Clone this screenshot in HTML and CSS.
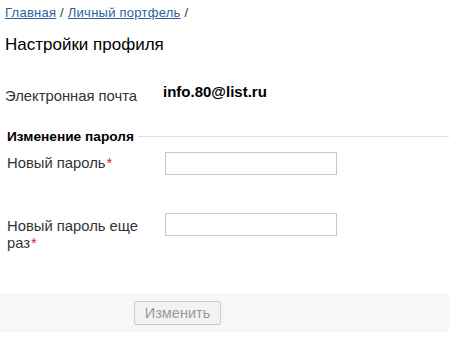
FILE: index.html
```html
<!DOCTYPE html>
<html lang="ru">
<head>
<meta charset="utf-8">
<link rel="stylesheet" href="styles.css">
</head>
<body>
<div class="page">
  <div class="crumbs"><a href="#">Главная</a> / <a href="#">Личный портфель</a> /</div>
  <h1 class="title">Настройки профиля</h1>
  <div class="row email-row">
    <div class="label">Электронная почта</div>
    <div class="value">info.80@list.ru</div>
  </div>
  <div class="section">
    <span class="section-title">Изменение пароля</span>
    <span class="section-line"></span>
  </div>
  <div class="row field">
    <div class="label">Новый пароль<span class="req">*</span></div>
    <input class="input" type="password">
  </div>
  <div class="row field field2">
    <div class="label">Новый пароль еще <span class="nowrap">раз<span class="req">*</span></span></div>
    <input class="input" type="password">
  </div>
  <div class="actions">
    <button class="btn" disabled>Изменить</button>
  </div>
</div>
</body>
</html>
```
FILE: styles.css
```css
html, body { margin: 0; padding: 0; background: #fff; }
body { font-family: "Liberation Sans", Arial, sans-serif; color: #333; font-size: 14.8px; }
.page { padding: 6px 0 0 0; }
.crumbs { font-size: 13px; letter-spacing: 0.25px; color: #333; padding-left: 5px; line-height: 14px; }
.crumbs a { color: #2f5f9e; text-decoration: underline; }
.title { font-size: 17px; font-weight: normal; color: #000; margin: 15px 0 0 5px; line-height: 20px; }
.row { display: flex; align-items: flex-start; }
.label { box-sizing: border-box; width: 165px; padding-left: 7px; padding-right: 20px; line-height: 17px; color: #333; }
.nowrap { white-space: nowrap; display: inline-block; }
.email-row { margin-top: 32px; }
.email-row .label { width: 163px; padding-left: 5px; line-height: 18px; }
.value { font-weight: bold; color: #000; font-size: 15px; line-height: 18px; margin-top: -4px; }
.section { display: flex; align-items: center; margin-top: 22px; padding-left: 7px; height: 18px; }
.section-title { font-weight: bold; color: #000; font-size: 13.7px; }
.section-line { flex: 1; height: 1px; background: #ddd; margin-left: 4px; }
.field { margin-top: 7px; align-items: center; }
.field2 { margin-top: 38px; align-items: flex-start; }
.field2 .label { margin-top: 5px; }
.req { color: #d22; margin-left: 1px; }
.input { width: 172px; height: 23px; box-sizing: border-box; border: 1px solid #c8c8c8; margin: 0; padding: 2px; background: #fff; }
.actions { margin-top: 41px; background: #f7f7f7; height: 39px; display: flex; align-items: center; padding-left: 134px; }
.btn { font-family: "Liberation Sans", Arial, sans-serif; font-size: 14.5px; color: #999; background: #f2f2f2; border: 1px solid #ccc; border-radius: 2px; width: 87px; height: 24px; padding: 0; }
```
